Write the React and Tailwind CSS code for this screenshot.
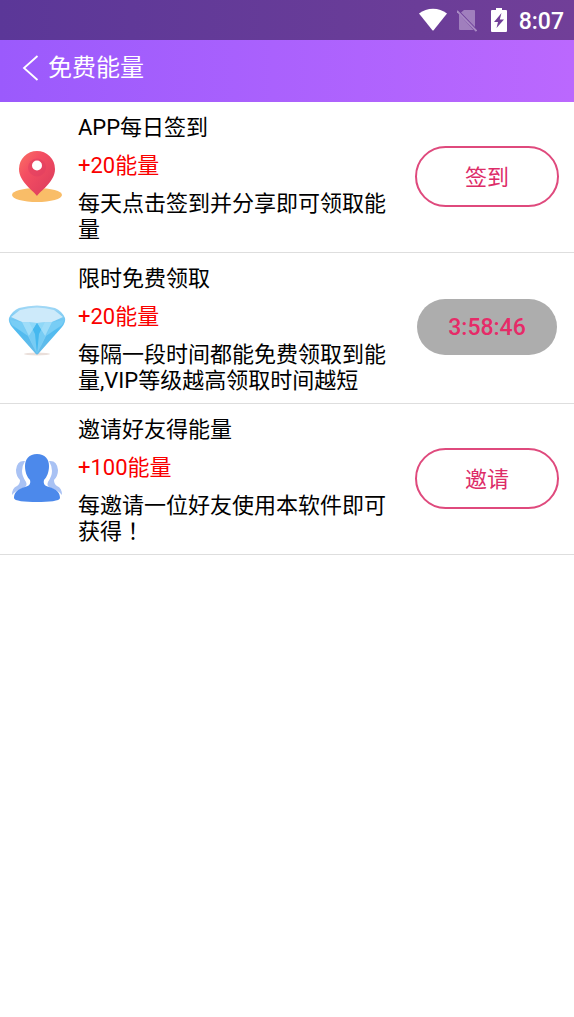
function StatusBar() {
  return (
    <div className="flex h-10 items-center justify-end bg-linear-to-r from-[#5b3798] to-[#713f98] pr-[10px] text-white">
      <svg className="mr-[10px] h-6 w-7" viewBox="0 0 28 24" fill="currentColor" aria-hidden="true">
        <path d="M0 5.500C8 -.8 20 -.8 28 5.500L14.600 22.200q-.6.700-1.200 0Z" />
      </svg>
      <svg className="mr-[14px] h-6 w-5" viewBox="0 0 20 24" aria-hidden="true">
        <path d="M7 2h10q1 0 1 1v16L4 4.500Z" fill="#a07fbd" />
        <path d="M2 6 16.500 22H3q-1 0-1-1Z" fill="#a07fbd" />
        <path d="M0 3 19.500 23" stroke="#a98bc4" strokeWidth="1.800" />
      </svg>
      <svg className="mr-3 h-6 w-4" viewBox="0 0 16 24" aria-hidden="true">
        <path d="M5 0h6v2h4q1 0 1 1v20q0 1-1 1H1q-1 0-1-1V3q0-1 1-1h4Z" fill="#fff" />
        <path d="M10.500 5 3 14h4l-1.500 6L13 11.500H8.800Z" fill="#713f98" />
      </svg>
      <time className="pt-1 text-[23px] leading-6 font-medium">8:07</time>
    </div>
  );
}

function PinIcon() {
  return (
    <svg className="h-[54px] w-[54px]" viewBox="0 0 54 54" aria-hidden="true">
      <defs>
        <linearGradient id="pin" x1="0" y1="0" x2="1" y2="1">
          <stop offset="0" stopColor="#fa7264" />
          <stop offset=".35" stopColor="#f44e62" />
          <stop offset="1" stopColor="#d93a5c" />
        </linearGradient>
      </defs>
      <ellipse cx="27" cy="46" rx="25" ry="7" fill="#f9bd68" />
      <path d="M27 47C24 42 9 33 9 20a18 18 0 0 1 36 0c0 13-15 22-18 27Z" fill="url(#pin)" />
      <circle cx="27" cy="18.500" r="9" fill="#e13f60" opacity=".6" />
      <circle cx="27" cy="16.500" r="5" fill="#fff" />
    </svg>
  );
}

function DiamondIcon() {
  return (
    <svg className="h-[58px] w-[60px]" viewBox="0 -6 60 58" aria-hidden="true">
      <defs>
        <linearGradient id="gem" x1="0" y1="0" x2="0" y2="1">
          <stop offset="0" stopColor="#a5d9f6" />
          <stop offset=".5" stopColor="#50bbf0" />
          <stop offset="1" stopColor="#68bce8" />
        </linearGradient>
      </defs>
      <ellipse cx="30" cy="50" rx="13" ry="1.500" fill="#eadfda" />
      <path d="M2 14Q5 7 12 4Q30-1 48 4Q55 7 58 14Q59 18 55 23L32 49Q30 52 28 49L5 23Q1 18 2 14Z" fill="url(#gem)" />
      <path d="M4 13 13 6Q30 1 47 6L56 13 45 18 30 19 15 18Z" fill="#cdeafa" />
      <path d="m3 16 12 2 6 14-16-11Z" fill="#78cdf5" />
      <path d="m57 16-12 2-6 14 16-11Z" fill="#78cdf5" />
      <path d="m15 18 15 1-8 13Z" fill="#8fd8f8" />
      <path d="m45 18-15 1 8 13Z" fill="#8fd8f8" />
      <path d="m30 19-8 13 8 18 8-18Z" fill="#45b8ef" />
      <path d="m22 18 6 12 2 20-9-18-6-14Z" fill="#b4e5fb" opacity=".45" />
      <path d="m38 18-6 12-2 20 9-18 6-14Z" fill="#b4e5fb" opacity=".45" />
    </svg>
  );
}

function PeopleIcon() {
  return (
    <svg className="h-[50px] w-[50px]" viewBox="0 0 50 50" aria-hidden="true">
      <g fill="#a9c2f4">
        <path d="M13 8Q5 7 4 17q0 6 4 10 0 4-3 6-5 2-5 9 4-5 11-7 5-2 3-6-4-6-4-11 0-5 3-10Z" />
        <path d="M37 8q8-1 9 9 0 6-4 10 0 4 3 6 5 2 5 9-4-5-11-7-5-2-3-6 4-6 4-11 0-5-3-10Z" />
      </g>
      <path d="M25 1c8 0 12 5 12 12 0 6-2 11-5 14-1 4 1 6 5 7 7 2 11 5 11 11 0 3-11 4-23 4S2 48 2 45c0-6 4-9 11-11 4-1 6-3 5-7-3-3-5-8-5-14C13 6 17 1 25 1Z" fill="#4c89eb" />
    </svg>
  );
}

const tasks = [
  {
    title: "APP每日签到",
    reward: "+20能量",
    description: "每天点击签到并分享即可领取能量",
    Icon: PinIcon,
    action: "签到",
  },
  {
    title: "限时免费领取",
    reward: "+20能量",
    description: "每隔一段时间都能免费领取到能量,VIP等级越高领取时间越短",
    Icon: DiamondIcon,
    action: "3:58:46",
    waiting: true,
  },
  {
    title: "邀请好友得能量",
    reward: "+100能量",
    description: (
      <>
        每邀请一位好友使用本软件即可获得
        <span className="font-[Roboto,'Noto_Sans_CJK_TC',sans-serif]" lang="zh-TW">！</span>
      </>
    ),
    Icon: PeopleIcon,
    action: "邀请",
  },
];

function Task({ title, reward, description, Icon, action, waiting }) {
  return (
    <li className="flex items-center border-b border-[#dedede] pt-[13px] pr-[15px] pb-[9px]">
      <div className="flex w-[78px] shrink-0 justify-center pr-1 pb-[6px]">
        <Icon />
      </div>
      <div className="flex min-w-0 flex-1 flex-col gap-3 pr-3 text-[22px] leading-[26px]">
        <h2>{title}</h2>
        <p className="text-[#fa0000]">{reward}</p>
        <p>{description}</p>
      </div>
      <div className="flex w-36 shrink-0 justify-center pb-[6px]">
        {waiting ? (
          <button disabled className="h-14 w-[140px] rounded-full bg-[#adadad] pt-[2px] text-[23px] font-medium text-[#e62b68]">
            {action}
          </button>
        ) : (
          <button className="h-[61px] w-full rounded-full border-2 border-[#df4a7d] pt-[2px] text-[22px] text-[#dd2c68]">
            {action}
          </button>
        )}
      </div>
    </li>
  );
}

export default function App() {
  return (
    <div className="min-h-screen bg-white font-[Roboto,'Noto_Sans_CJK_SC',sans-serif] text-black" lang="zh-CN">
      <StatusBar />
      <header className="flex h-[62px] items-center bg-linear-to-r from-[#9b5afc] to-[#bb68fe] pb-[6px] pl-[22px] text-white">
        <button aria-label="返回" className="mr-[9px]">
          <svg className="h-[26px] w-[17px]" viewBox="0 0 17 26" fill="none" stroke="currentColor" strokeWidth="1.800" aria-hidden="true">
            <path d="M15.500 1 2 13l13.500 12" />
          </svg>
        </button>
        <h1 className="text-2xl">免费能量</h1>
      </header>
      <main>
        <ul>
          {tasks.map((task) => (
            <Task key={task.title} {...task} />
          ))}
        </ul>
      </main>
    </div>
  );
}
